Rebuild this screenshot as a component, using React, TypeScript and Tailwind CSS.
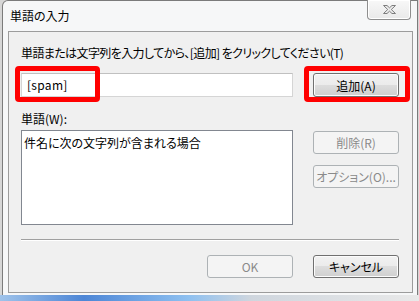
import React from 'react';

const font = "font-['Meiryo_UI','Noto_Sans_CJK_JP',sans-serif] [font-feature-settings:'palt']";

const Btn = ({ label, disabled, w = 'w-[86px]' }: { label: string; disabled?: boolean; w?: string }) => (
  <button
    className={
      disabled
        ? `${w} h-[23px] rounded-[3px] border border-[#adb2b5] bg-[#f4f4f4] text-[12px] leading-[15px] text-[#8a8a8a]`
        : `${w} h-[23px] rounded-[3px] border border-[#707070] bg-[linear-gradient(#f2f2f2_0%,#ebebeb_50%,#dddddd_50%,#cfcfcf_100%)] shadow-[inset_0_0_0_1px_#fcfcfc] text-[12px] leading-[15px] text-black`
    }
  >
    {label}
  </button>
);

const App = () => {
  return (
    <div className={`relative w-[419px] h-[301px] overflow-hidden bg-[#d6d6d6] ${font}`}>
      {/* ウィンドウ枠 */}
      <div className="ml-[2px] w-[416px] h-[295px] flex flex-col border-x border-t border-[#7b7b7b] rounded-tl-[6px] bg-[#f6f7f8] pl-[5px] pr-[4px] pb-[2px]">
        <div className="h-[30px] flex items-center text-[12px] text-black pl-[2px]">単語の入力</div>

        {/* クライアント領域 */}
        <div className="flex-1 flex flex-col border border-[#9c9c9c] bg-[#f0f0f0] pt-[13px] pl-[12px] pr-[13px] text-[12px] text-black">
          <div className="h-[15px] leading-[15px] tracking-[-0.6px]">単語または文字列を入力してから、[追加] をクリックしてください(T)</div>

          <div className="relative mt-[13px] h-[24px] flex justify-between">
            <div className="w-[272px] h-[24px] border border-[#d5d5d5] border-t-[#c0c0c0] bg-white pl-[5px] leading-[22px] tracking-[0.3px]">[spam]</div>
            <button className="w-[86px] h-[24px] rounded-[3px] border border-[#707070] bg-[linear-gradient(#f2f2f2_0%,#ebebeb_50%,#dddddd_50%,#cfcfcf_100%)] shadow-[inset_0_0_0_1px_#fcfcfc] text-[12px] leading-[15px]">
              追加(A)
            </button>
            <div className="absolute left-[-6px] top-[-7px] w-[85px] h-[36px] border-[5px] border-[#ff0000] rounded-[4px]" />
            <div className="absolute left-[283px] top-[-7px] w-[106px] h-[36px] border-[5px] border-[#ff0000] rounded-[4px]" />
          </div>

          <div className="mt-[14px] h-[15px] leading-[15px]">単語(W):</div>

          <div className="mt-[4px] flex justify-between">
            <div className="w-[272px] h-[95px] border border-[#828790] bg-white pl-[2px] pt-[4px] leading-[15px]">
              件名に次の文字列が含まれる場合
            </div>
            <div className="flex flex-col gap-[11px] pt-[1px]">
              <Btn label="削除(R)" disabled />
              <Btn label="オプション(O)..." disabled />
            </div>
          </div>

          <div className="mt-[14px] h-[2px] border-t border-[#a0a0a0] border-b border-b-white" />

          <div className="mt-[14px] flex justify-end gap-[20px]">
            <Btn label="OK" disabled />
            <Btn label="キャンセル" />
          </div>
        </div>
      </div>

      {/* 閉じるボタン */}
      <div className="absolute left-[367px] top-0 w-[44px] h-[20px] rounded-b-[4px] border-x border-b border-[#8e8e8e] bg-[linear-gradient(#f8f8f8,#e9e9e9)] flex items-center justify-center shadow-[inset_0_0_0_1px_#ffffff]">
        <svg width="15" height="11" viewBox="0 0 15 11">
          <path
            d="M1.5 1.5h3.5l2.5 2.3 2.5-2.3h3.5l-4.2 4 4.2 4h-3.5l-2.5-2.3-2.5 2.3h-3.5l4.2-4z"
            fill="#ececec"
            stroke="#7d7d7d"
            strokeWidth="1"
            strokeLinejoin="round"
          />
        </svg>
      </div>

      {/* タスクバー */}
      <div className="h-[6px] bg-[linear-gradient(90deg,#9fc3ea_0%,#4d86d6_20%,#8ec0f0_45%,#cfd6de_60%,#e9e9e9_100%)]" />
    </div>
  );
};

export default App;
